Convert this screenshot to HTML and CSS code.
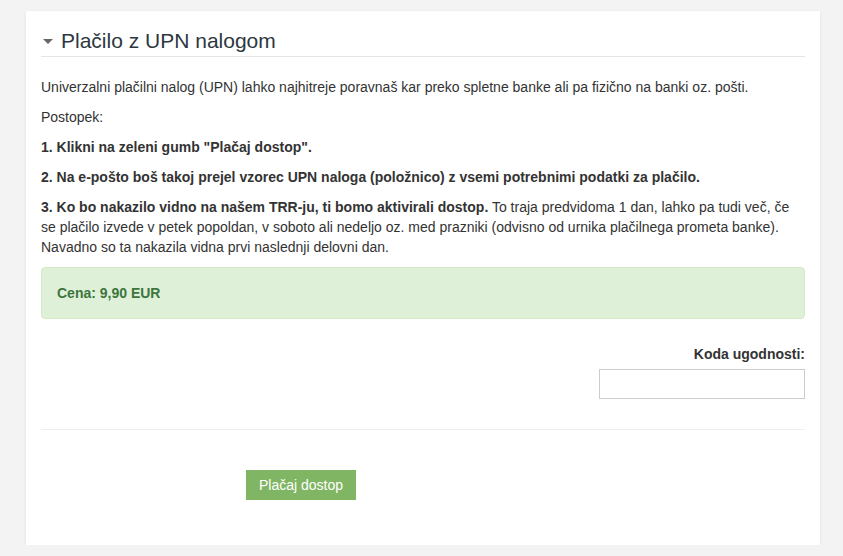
FILE: index.html
```html
<!DOCTYPE html>
<html lang="sl">
<head>
  <meta charset="UTF-8">
  <meta name="viewport" content="width=device-width, initial-scale=1.0">
  <title>Plačilo z UPN nalogom</title>
  <link rel="stylesheet" href="styles.css">
</head>
<body>
  <div class="panel">
    <form id="upnForm">
      <h2 class="legend"><span class="caret"></span>Plačilo z UPN nalogom</h2>

      <p>Univerzalni plačilni nalog (UPN) lahko najhitreje poravnaš kar preko spletne banke ali pa fizično na banki oz. pošti.</p>
      <p>Postopek:</p>
      <p><b>1. Klikni na zeleni gumb "Plačaj dostop".</b></p>
      <p><b>2. Na e-pošto boš takoj prejel vzorec UPN naloga (položnico) z vsemi potrebnimi podatki za plačilo.</b></p>
      <p><b>3. Ko bo nakazilo vidno na našem TRR-ju, ti bomo aktivirali dostop.</b> To traja predvidoma 1 dan, lahko pa tudi več, če se plačilo izvede v petek popoldan, v soboto ali nedeljo oz. med prazniki (odvisno od urnika plačilnega prometa banke). Navadno so ta nakazila vidna prvi naslednji delovni dan.</p>

      <div class="alert-success">Cena: 9,90 EUR</div>

      <div class="coupon">
        <label for="couponCode">Koda ugodnosti:</label>
        <input type="text" id="couponCode">
      </div>

      <hr>

      <div class="actions">
        <button type="button" class="btn-pay">Plačaj dostop</button>
      </div>
    </form>
  </div>
</body>
</html>
```

FILE: styles.css
```css
body {
  font-family: "Liberation Sans", Arial, sans-serif;
  font-size: 14px;
  line-height: 20px;
  color: #333;
  background-color: #f3f3f3;
  margin: 0;
  padding: 11px 0 0 26px;
}

.panel {
  background-color: #fff;
  width: 764px;
  height: 504px;
  padding: 15px;
  box-shadow: 0 1px 3px rgba(0, 0, 0, 0.08);
}

.legend {
  display: flex;
  align-items: center;
  font-size: 21px;
  font-weight: normal;
  line-height: 30px;
  color: #2d3740;
  margin: 0 0 20px;
  border-bottom: 1px solid #e5e5e5;
  height: 30px;
}

.caret {
  width: 0;
  height: 0;
  margin: 0 8px 0 2px;
  border-left: 5px solid transparent;
  border-right: 5px solid transparent;
  border-top: 5px solid #666;
}

p {
  margin: 0 0 10px;
}

.alert-success {
  background-color: #dff0d8;
  border: 1px solid #d6e9c6;
  border-radius: 4px;
  color: #3c763d;
  font-weight: bold;
  padding: 15px;
  margin-top: 10px;
}

.coupon {
  display: flex;
  flex-direction: column;
  align-items: flex-end;
  margin-top: 25px;
}

.coupon label {
  font-weight: bold;
  margin-bottom: 5px;
}

.coupon input {
  width: 206px;
  height: 30px;
  padding: 4px 8px;
  box-sizing: border-box;
  border: 1px solid #ccc;
  font-size: 14px;
}

hr {
  border: 0;
  border-top: 1px solid #eee;
  margin: 30px 0 40px;
}

.actions {
  padding-left: 205px;
}

.btn-pay {
  font-family: "Liberation Sans", Arial, sans-serif;
  font-size: 14px;
  line-height: 20px;
  padding: 5px 13px;
  background-color: #80b563;
  color: #fff;
  border: none;
  border-radius: 0;
  cursor: pointer;
}
```
